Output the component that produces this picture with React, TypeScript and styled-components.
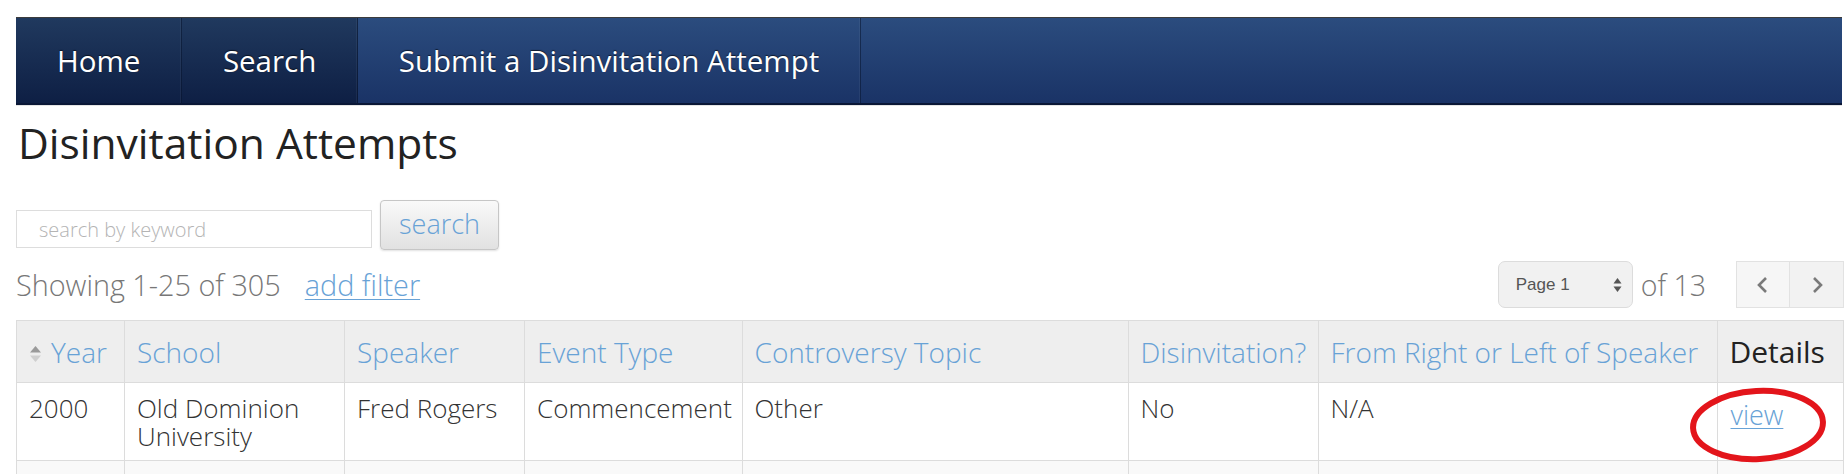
import styled, {createGlobalStyle} from "styled-components";

const GlobalStyle = createGlobalStyle`
  html, body {
    margin: 0;
    overflow: hidden;
    background: #fff;
    font-family: "Open Sans", "DejaVu Sans", sans-serif;
  }
`;

const Page = styled.div`
  width: 1826px;
  padding: 17px 0 0 16px;
`;

const Nav = styled.nav`
  display: flex;
  height: 85px;
  border-top: 1px solid #3c3c3c;
  border-bottom: 2px solid #0a1736;
  background: linear-gradient(#2b4c7e, #1a3366);
  box-shadow: 0 1px 0 #e4e4e4;
`;

const Tab = styled.a<{$dark?: boolean}>`
  display: flex;
  align-items: center;
  padding: 0 40.5px 0 41px;
  font-size: 29.5px;
  color: #fff;
  text-decoration: none;
  text-shadow: 0 -1px 1px rgba(0, 0, 0, 0.6);
  border-right: 1px solid rgba(8, 20, 45, 0.55);
  box-shadow: inset -1px 0 0 rgba(255, 255, 255, 0.05);
  background: ${({$dark}) =>
    $dark ? "linear-gradient(#20395e, #0e1f44)" : "transparent"};
`;

const Title = styled.h1`
  margin: 14px 0 0 2px;
  font-size: 42.5px;
  line-height: 47px;
  font-weight: 500;
  color: #222;
`;

const SearchRow = styled.form`
  display: flex;
  align-items: flex-end;
  gap: 8px;
  margin-top: 34px;
`;

const KeywordInput = styled.input`
  box-sizing: border-box;
  width: 356px;
  height: 38px;
  margin-bottom: 2px;
  padding: 0 22px;
  border: 1px solid #ddd;
  font-family: inherit;
  font-size: 20px;
  font-weight: 300;
  color: #333;
  outline: none;

  &::placeholder {
    color: #b4b4b4;
  }
`;

const SearchButton = styled.button`
  box-sizing: border-box;
  width: 119px;
  height: 50px;
  border: 1px solid #c6c6c6;
  border-radius: 4px;
  background: linear-gradient(#f9f9f9, #e1e1e1);
  box-shadow: 0 1px 2px rgba(0, 0, 0, 0.12);
  font-family: inherit;
  font-size: 27px;
  font-weight: 300;
  color: #68a2d6;
  padding: 0 0 3px;
`;

const InfoRow = styled.div`
  display: flex;
  justify-content: space-between;
  align-items: center;
  height: 47px;
  margin-top: 11px;
`;

const Showing = styled.div`
  font-size: 28.8px;
  font-weight: 300;
  color: #777;
`;

const Link = styled.a`
  color: #68a2d6;
  text-decoration: underline;
  text-underline-offset: 3px;
  text-decoration-thickness: 1px;
`;

const FilterLink = styled(Link)`
  margin-left: 24px;
`;

const Pager = styled.div`
  display: flex;
  align-items: center;
  margin-right: -2px;
`;

const PageSelect = styled.div`
  box-sizing: border-box;
  display: flex;
  align-items: center;
  justify-content: space-between;
  width: 135px;
  height: 47px;
  padding: 0 10px 0 17px;
  border: 1px solid #dcdcdc;
  border-radius: 7px;
  background: #f1f1f1;
  font-family: "Liberation Sans", Arial, sans-serif;
  font-size: 17px;
  color: #555;
`;

const OfCount = styled.span`
  margin: 0 30px 0 8px;
  font-size: 28.5px;
  font-weight: 300;
  color: #777;
`;

const PagerButtons = styled.div`
  display: flex;
`;

const PagerButton = styled.button`
  box-sizing: border-box;
  display: flex;
  align-items: center;
  justify-content: center;
  width: 54px;
  height: 47px;
  border: 1px solid #e2e2e2;
  background: #f6f6f6;
  padding: 0;

  & + & {
    border-left: none;
    background: #f2f2f2;
  }
`;

const Table = styled.table`
  width: 1826px;
  margin-top: 12px;
  border-collapse: collapse;
  table-layout: fixed;
  font-size: 26px;
  font-weight: 300;
`;

const Th = styled.th<{$plain?: boolean}>`
  height: 61px;
  padding: 0 12px;
  border: 1px solid #dcdcdc;
  background: #eeeeee;
  text-align: left;
  font-size: ${({$plain}) => ($plain ? "30px" : "28px")};
  font-weight: ${({$plain}) => ($plain ? 400 : 300)};
  color: ${({$plain}) => ($plain ? "#222" : "#68a2d6")};
  white-space: nowrap;
  overflow: hidden;
`;

const Td = styled.td`
  position: relative;
  height: 78px;
  box-sizing: border-box;
  padding: 11px 12px 0;
  border: 1px solid #dcdcdc;
  vertical-align: top;
  line-height: 28px;
  color: #333;
`;

const StripeRow = styled.tr`
  background: #f9f9f9;
`;

const SortIcon = styled.svg`
  margin: 0 9px -1px 0;
`;

const ViewLink = styled(Link)`
  display: inline-block;
  margin-left: 1px;
  padding-top: 7px;
  font-size: 27px;
`;

const Circle = styled.svg`
  position: absolute;
  left: -31px;
  top: 2px;
  pointer-events: none;
`;

const columns = [108, 220, 180, 217.5, 386, 190, 399, 126];

const headers = [
  "School",
  "Speaker",
  "Event Type",
  "Controversy Topic",
  "Disinvitation?",
  "From Right or Left of Speaker",
];

const row = ["2000", "Old Dominion University", "Fred Rogers", "Commencement", "Other", "No", "N/A"];

const Chevron = ({left}: {left?: boolean}) => (
  <svg width="14" height="20" viewBox="0 0 14 20">
    <polyline
      points={left ? "10,3 3,10 10,17" : "4,3 11,10 4,17"}
      fill="none"
      stroke="#7a7a7a"
      strokeWidth="2.6"
    />
  </svg>
);

const App = () => (
  <Page>
    <GlobalStyle />
    <Nav>
      <Tab $dark>Home</Tab>
      <Tab $dark>Search</Tab>
      <Tab>Submit a Disinvitation Attempt</Tab>
    </Nav>

    <Title>Disinvitation Attempts</Title>

    <SearchRow onSubmit={(e) => e.preventDefault()}>
      <KeywordInput placeholder="search by keyword" />
      <SearchButton>search</SearchButton>
    </SearchRow>

    <InfoRow>
      <Showing>
        Showing 1-25 of 305
        <FilterLink>add filter</FilterLink>
      </Showing>
      <Pager>
        <PageSelect>
          Page 1
          <svg width="9" height="16" viewBox="0 0 9 16">
            <polygon points="4.5,1 8.5,6.5 0.5,6.5" fill="#555" />
            <polygon points="0.5,9.5 8.5,9.5 4.5,15" fill="#555" />
          </svg>
        </PageSelect>
        <OfCount>of 13</OfCount>
        <PagerButtons>
          <PagerButton>
            <Chevron left />
          </PagerButton>
          <PagerButton>
            <Chevron />
          </PagerButton>
        </PagerButtons>
      </Pager>
    </InfoRow>

    <Table>
      <colgroup>
        {columns.map((w, i) => (
          <col key={i} style={{width: w}} />
        ))}
      </colgroup>
      <thead>
        <tr>
          <Th>
            <SortIcon width="13" height="20" viewBox="0 0 13 20">
              <polygon points="6.5,2 12,8.5 1,8.5" fill="#9a9a9a" />
              <polygon points="1,11.5 12,11.5 6.5,18" fill="#cfcfcf" />
            </SortIcon>
            Year
          </Th>
          {headers.map((h) => (
            <Th key={h}>{h}</Th>
          ))}
          <Th $plain>Details</Th>
        </tr>
      </thead>
      <tbody>
        <tr>
          {row.map((c, i) => (
            <Td key={i}>{c}</Td>
          ))}
          <Td>
            <ViewLink>view</ViewLink>
            <Circle width="142" height="80" viewBox="0 0 142 80">
              <ellipse
                cx="71"
                cy="40"
                rx="65"
                ry="34"
                fill="none"
                stroke="#e3151b"
                strokeWidth="6"
                transform="rotate(-3 71 40)"
              />
            </Circle>
          </Td>
        </tr>
        <StripeRow>
          {columns.map((_, i) => (
            <Td key={i} />
          ))}
        </StripeRow>
      </tbody>
    </Table>
  </Page>
);

export default App;
